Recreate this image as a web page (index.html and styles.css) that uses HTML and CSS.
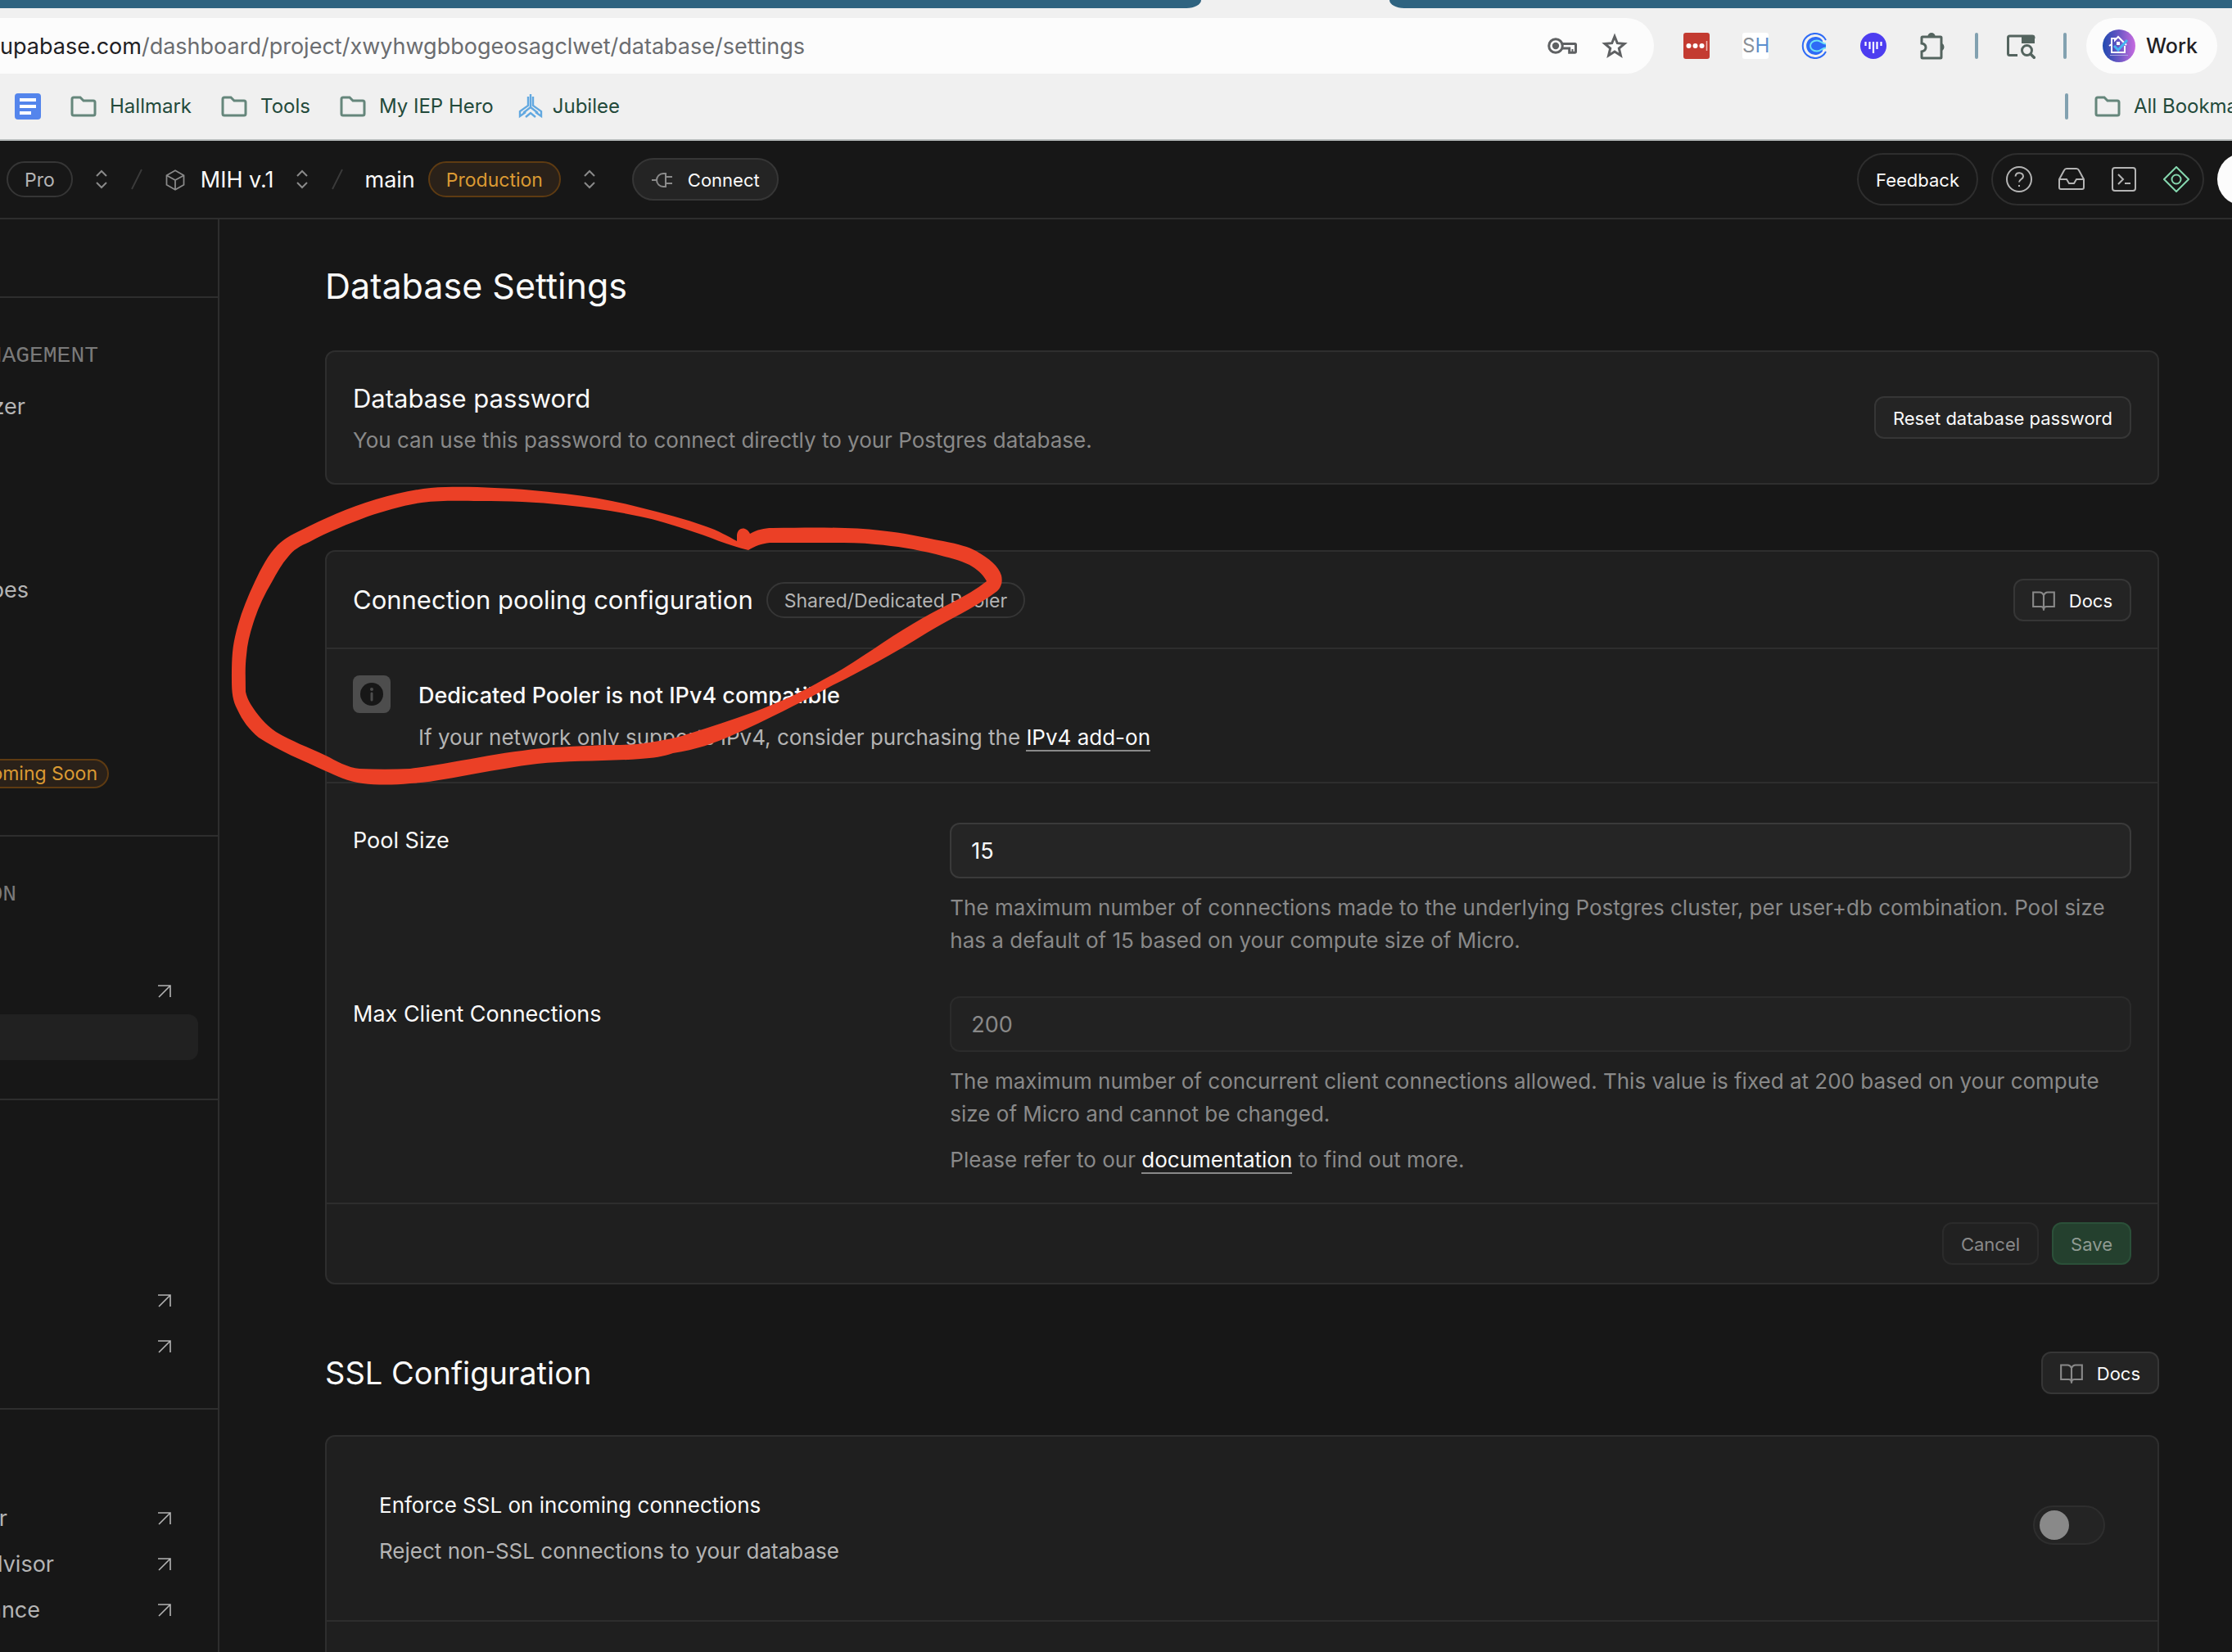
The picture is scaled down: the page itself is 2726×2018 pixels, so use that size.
FILE: index.html
```html
<!DOCTYPE html>
<html lang="en">
<head>
<meta charset="utf-8">
<meta name="viewport" content="width=device-width, initial-scale=1">
<title>Database Settings</title>
<link rel="stylesheet" href="styles.css">
</head>
<body>
<svg class="sprite" aria-hidden="true">
  <symbol id="folder" viewBox="0 0 32 32"><path d="M2 7a2 2 0 0 1 2-2h8l4 4h12a2 2 0 0 1 2 2v14a2 2 0 0 1-2 2H4a2 2 0 0 1-2-2z" fill="none" stroke="currentColor" stroke-width="3"/></symbol>
  <symbol id="updown" viewBox="0 0 24 24"><path d="M6 8l6-6 6 6M6 16l6 6 6-6" fill="none" stroke="currentColor" stroke-width="2"/></symbol>
  <symbol id="slash" viewBox="0 0 14 26"><path d="M13 1L1 25" fill="none" stroke="currentColor" stroke-width="2"/></symbol>
  <symbol id="external" viewBox="0 0 18 18"><path d="M1 2h15v14M16 2L2 16" fill="none" stroke="currentColor" stroke-width="1.600"/></symbol>
  <symbol id="book" viewBox="0 0 24 24"><path d="M12 6v16M12 6c-1-2-2-3-4-3H1v15h8c1.500 0 3 1 3 3 0-2 1.500-3 3-3h8V3h-7c-2 0-3 1-4 3z" fill="none" stroke="currentColor" stroke-width="1.800"/></symbol>
</svg>

<div class="tabs"><span class="tab-left"></span><span class="tab-right"></span></div>
<div class="toolbar">
  <div class="address">
    <span class="address-text">upabase.com<span class="path">/dashboard/project/xwyhwgbbogeosagclwet/database/settings</span></span>
    <span class="address-icons">
      <svg width="36" height="24" viewBox="0 0 36 24" fill="none" stroke="#5f6163"><circle cx="10" cy="12" r="8.300" stroke-width="3"/><circle cx="10" cy="12" r="4.200" fill="#5f6163" stroke="none"/><path d="M18 9.500h15.500q1 0 1 1v8.500q0 1.300-1.300 1.300h-6.500v-5.300H18" stroke-width="3"/><path d="M30.500 16v4" stroke-width="2"/></svg>
      <svg width="32" height="32" viewBox="0 0 32 32" fill="none" stroke="#5f6163" stroke-width="3"><path d="M16 4.500l3.300 8.200 8.700.7-6.700 5.700 2.100 8.700-7.400-4.700-7.400 4.700 2.100-8.700L4 13.400l8.700-.7z"/></svg>
    </span>
  </div>
  <div class="extensions">
    <svg width="32" height="32" viewBox="0 0 32 32"><rect width="32" height="32" rx="3" fill="#c33b31"/><g fill="#fff"><circle cx="6.500" cy="16" r="3"/><circle cx="14.500" cy="16" r="3"/><circle cx="22.500" cy="16" r="3"/></g><path d="M28.500 10v12" stroke="#f0b9b5" stroke-width="1.500"/></svg>
    <span class="sh">S<b>H</b></span>
    <svg width="32" height="32" viewBox="0 0 32 32" fill="none"><path d="M30 9A15 15 0 1 0 30 23" stroke="#2e6bf6" stroke-width="2"/><path d="M26 9.500A11 11 0 1 0 26 22.500q-1-2 4-4.500v-4q-5-2-4-4.500z" fill="#2e6bf6"/><path d="M30 13.500c-5 0-6-4-11-4-5 0-8 3-8 6.500s3 6.500 8 6.500 6-4 11-4" stroke="#6fe3f5" stroke-width="2"/></svg>
    <svg width="32" height="32" viewBox="0 0 32 32"><circle cx="16" cy="16" r="16" fill="#4d3df0"/><path d="M6.500 11v5M11.500 11v9M16 11v14M20.500 11v9M25.500 11v5" stroke="#fff" stroke-width="2.200"/></svg>
    <svg width="34" height="34" viewBox="0 0 34 34"><path d="M4 6q-1 0-1 1v7q5 1 5 5t-5 5v7q0 1 1 1h22q1 0 1-1V7q0-1-1-1z" fill="none" stroke="#54645f" stroke-width="3"/><path d="M10.500 5a4.500 4 0 0 1 9 0zM28 14a4.500 5 0 0 1 0 9z" fill="#54645f"/></svg>
    <i class="rule"></i>
    <svg width="36" height="32" viewBox="0 0 36 32"><path d="M14 27.500H4.500q-2 0-2-2V6q0-2 2-2H32q2 0 2 2v1" fill="none" stroke="#54645f" stroke-width="3"/><path d="M19 3h14q2 0 2 2v8H19z" fill="#54645f"/><circle cx="25.500" cy="21.500" r="6" fill="none" stroke="#54645f" stroke-width="3"/><path d="M29.500 25.500l6 6" stroke="#54645f" stroke-width="3.500"/></svg>
    <i class="rule"></i>
  </div>
  <button class="profile">
    <svg width="40" height="40" viewBox="0 0 40 40"><defs><linearGradient id="pg"><stop offset="0" stop-color="#1f49b0"/><stop offset=".5" stop-color="#6a57c4"/><stop offset="1" stop-color="#c86be0"/></linearGradient></defs><circle cx="20" cy="20" r="20" fill="url(#pg)"/><path d="M8 20l3-2v-7h4v2l4-4 10 10M11 18v10h16v-8" fill="none" stroke="#fff" stroke-width="2"/><path d="M17 15h4v4h-4z" fill="#fff"/><path d="M14 20l5 5 11-12" fill="none" stroke="#45b5f3" stroke-width="3"/><path d="M9 31.500h22" stroke="#a9a3e0"/></svg>
    Work
  </button>
</div>
<nav class="bookmarks">
  <a href="#" aria-label="Docs"><svg width="32" height="32" viewBox="0 0 32 32"><rect width="32" height="32" rx="4" fill="#5485ec"/><path d="M6 8h20M6 16h20M6 24h14" stroke="#fff" stroke-width="4"/></svg></a>
  <a href="#"><svg class="folder"><use href="#folder"/></svg>Hallmark</a>
  <a href="#"><svg class="folder"><use href="#folder"/></svg>Tools</a>
  <a href="#"><svg class="folder"><use href="#folder"/></svg>My IEP Hero</a>
  <a href="#" class="jubilee"><svg width="30" height="30" viewBox="0 0 30 30" fill="none" stroke="#62a8e0" stroke-width="2.400"><path d="M12 3v11L2 21v6l7-5M18 3v11l10 7v6l-7-5M15 0v16l-9 7M15 16l9 7M9 28l6-5 6 5"/></svg>Jubilee</a>
  <span class="all"><i class="rule"></i><a href="#"><svg class="folder"><use href="#folder"/></svg>All Bookmarks</a></span>
</nav>

<header class="header">
  <span class="badge">Pro</span>
  <svg class="updown"><use href="#updown"/></svg>
  <svg class="slash"><use href="#slash"/></svg>
  <a href="#" class="crumb"><svg width="28" height="28" viewBox="0 0 24 24" fill="none" stroke="#8a8a8a" stroke-width="1.500"><path d="M12 2l9 5v10l-9 5-9-5V7zM3 7l9 5 9-5M12 12v10"/></svg>MIH v.1</a>
  <svg class="updown"><use href="#updown"/></svg>
  <svg class="slash"><use href="#slash"/></svg>
  <a href="#" class="crumb branch">main</a>
  <span class="badge amber">Production</span>
  <svg class="updown"><use href="#updown"/></svg>
  <button class="btn connect"><svg width="28" height="24" viewBox="0 0 28 24" fill="none" stroke="#8a8a8a" stroke-width="2"><path d="M1 12h6M18 4h-3a8 8 0 0 0 0 16h3zM18 8h8M18 16h8"/></svg>Connect</button>
  <div class="header-right">
    <button class="feedback">Feedback</button>
    <div class="tools">
      <button aria-label="Help"><svg viewBox="0 0 32 32"><circle cx="16" cy="16" r="15"/><path d="M11.500 12.500c.5-6 9.500-5.500 9.500 0 0 3.500-5 3.500-5 7M16 23v2"/></svg></button>
      <button aria-label="Inbox"><svg viewBox="0 0 32 32"><path d="M1 16h9l3 5h6l3-5h9M7 5L1 16v10q0 2 2 2h26q2 0 2-2V16L25 5q-1-2-3-2H10q-2 0-3 2z"/></svg></button>
      <button aria-label="SQL"><svg viewBox="0 0 32 32"><rect x="2" y="2" width="28" height="28" rx="3"/><path d="M9 10l6 6-6 6M17 21h7"/></svg></button>
      <button aria-label="Assistant" class="green"><svg viewBox="0 0 32 32"><path d="M16 1l15 15-15 15L1 16z"/><circle cx="16" cy="16" r="5.500"/></svg></button>
    </div>
    <span class="avatar"></span>
  </div>
</header>

<div class="layout">
  <aside class="sidebar">
    <div class="side-top"></div>
    <section>
      <h2><span class="to-120">NAGEMENT</span></h2>
      <ul>
        <li><a href="#" class="to-30">zer</a></li>
        <li></li><li></li><li></li>
        <li><a href="#" class="to-35">pes</a></li>
        <li></li><li></li><li></li>
        <li><span class="soon">oming Soon</span></li>
      </ul>
    </section>
    <section>
      <h2><span class="to-20">ON</span></h2>
      <ul>
        <li></li>
        <li><svg class="ext"><use href="#external"/></svg></li>
        <li class="active"></li>
      </ul>
    </section>
    <section>
      <h2></h2>
      <ul>
        <li></li><li></li>
        <li><svg class="ext"><use href="#external"/></svg></li>
        <li><svg class="ext"><use href="#external"/></svg></li>
      </ul>
    </section>
    <section>
      <h2></h2>
      <ul>
        <li><a href="#" class="to-10">r</a><svg class="ext"><use href="#external"/></svg></li>
        <li><a href="#" class="to-66">dvisor</a><svg class="ext"><use href="#external"/></svg></li>
        <li><a href="#" class="to-50">ance</a><svg class="ext"><use href="#external"/></svg></li>
      </ul>
    </section>
  </aside>

  <main class="main">
    <h1>Database Settings</h1>
    <section class="card password">
      <div>
        <h3>Database password</h3>
        <p>You can use this password to connect directly to your Postgres database.</p>
      </div>
      <button class="btn">Reset database password</button>
    </section>

    <form class="card pooling">
      <div class="card-head">
        <h3>Connection pooling configuration</h3>
        <span class="badge">Shared/Dedicated Pooler</span>
        <button type="button" class="btn docs"><svg class="book"><use href="#book"/></svg>Docs</button>
      </div>
      <div class="callout">
        <svg width="46" height="46" viewBox="0 0 46 46"><rect width="46" height="46" rx="8" fill="#4d4d4d"/><circle cx="23" cy="23" r="14" fill="#171717"/><path d="M23 22v8" stroke="#4d4d4d" stroke-width="3" stroke-linecap="round"/><circle cx="23" cy="17" r="2" fill="#4d4d4d"/></svg>
        <div>
          <h4>Dedicated Pooler is not IPv4 compatible</h4>
          <p>If your network only supports IPv4, consider purchasing the <a href="#">IPv4 add-on</a></p>
        </div>
      </div>
      <div class="fields">
        <label for="pool">Pool Size</label>
        <div>
          <input id="pool" type="text" value="15">
          <p>The maximum number of connections made to the underlying Postgres cluster, per user+db combination. Pool size has a default of 15 based on your compute size of Micro.</p>
        </div>
        <label for="max">Max Client Connections</label>
        <div>
          <input id="max" type="text" value="200" disabled>
          <p>The maximum number of concurrent client connections allowed. This value is fixed at 200 based on your compute size of Micro and cannot be changed.</p>
          <p>Please refer to our <a href="#">documentation</a> to find out more.</p>
        </div>
      </div>
      <div class="card-foot">
        <button type="button" class="btn" disabled>Cancel</button>
        <button type="submit" class="btn primary" disabled>Save</button>
      </div>
    </form>

    <div class="section-head">
      <h2>SSL Configuration</h2>
      <button class="btn docs"><svg class="book"><use href="#book"/></svg>Docs</button>
    </div>
    <section class="card">
      <div class="ssl">
        <div>
          <label for="ssl">Enforce SSL on incoming connections</label>
          <p>Reject non-SSL connections to your database</p>
        </div>
        <input id="ssl" type="checkbox" role="switch">
      </div>
      <div class="ssl-next"></div>
    </section>
  </main>
</div>

<svg class="marker" width="1260" height="980" viewBox="0 0 1260 980" aria-hidden="true">
  <path fill="#eb4026" fill-rule="evenodd" d="M900 661L900 654C901 643 912 643 916 652C925 647 933 645 943 645C1000 644 1040 644 1075 648C1105 651 1125 656 1152 661C1172 665 1183 668 1192 673C1208 682 1220 692 1223 703C1225 712 1222 718 1218 722C1190 743 1158 757 1132 773C1092 798 1052 820 1017 837C975 860 935 880 897 897C872 908 850 916 822 920C810 924 798 926 782 927C740 930 695 929 656 933C630 936 605 941 581 945C553 950 525 956 501 957C480 959 460 959 443 957C425 955 410 947 398 942C370 929 340 917 316 901C304 891 296 880 290 867C284 856 283 845 283 831C283 812 283 795 287 778C292 755 301 732 311 711C319 694 328 677 339 666C346 659 356 653 367 648C395 634 425 620 459 610C483 603 505 598 526 596C555 594 580 595 604 596C635 597 662 600 690 603C722 607 753 612 782 620C810 627 837 634 862 643C877 648 889 655 900 661ZM914 672C891 667 865 655 839 647C820 641 802 635 782 631C750 624 720 620 690 617C655 613 620 612 587 612C560 612 540 611 515 614C493 617 470 624 449 631C425 640 400 650 378 662C366 667 358 672 352 680C344 689 338 700 332 711C323 726 316 741 311 756C306 771 302 785 301 800C299 815 300 830 300 845C301 850 303 855 306 860C314 873 324 885 337 894C355 905 377 913 398 923C410 929 425 938 439 939C460 940 480 940 501 939C518 937 535 934 552 931C582 926 610 920 638 917C670 912 705 912 736 910C757 910 776 910 793 907C810 904 825 902 839 897C868 888 895 879 920 870C952 858 980 845 1006 830C1045 810 1080 782 1115 762C1145 743 1180 730 1205 710C1200 701 1193 695 1184 690C1172 684 1158 681 1143 677C1118 671 1095 667 1069 665C1052 663 1035 663 1017 663L940 663C930 664 922 667 914 672Z"/>
</svg>
</body>
</html>
```
FILE: styles.css
```css
* { box-sizing: border-box; }
body {
  margin: 0;
  height: 100vh;
  position: relative;
  display: flex;
  flex-direction: column;
  overflow: hidden;
  background: #171717;
  color: #fafafa;
  font: 27px/40px Inter, "Liberation Sans", sans-serif;
}
h1, h2, h3, h4, p, ul { margin: 0; padding: 0; font-weight: 400; }
ul { list-style: none; }
a { color: inherit; text-decoration: none; }
button, input { font: inherit; color: inherit; margin: 0; }
button { padding: 0; border: 0; background: none; }
svg { flex: none; }
.sprite { position: absolute; width: 0; height: 0; }
.marker { position: absolute; left: 0; top: 0; pointer-events: none; }

/* Browser chrome */
.tabs { flex: none; display: flex; justify-content: space-between; height: 10px; background: #f0f0f0; }
.tab-left { width: 1467px; background: #2f6380; border-bottom-right-radius: 18px 10px; }
.tab-right { width: 1029px; background: #2f6380; border-bottom-left-radius: 18px 10px; }
.toolbar { flex: none; display: flex; align-items: center; height: 92px; padding-right: 18px; background: #f0f0f0; color: #1f2023; }
.address { flex: 1; height: 68px; display: flex; align-items: center; justify-content: space-between; padding-right: 32px; background: #fcfcfc; border-radius: 0 34px 34px 0; }
.address-text { padding-top: 2px; white-space: nowrap; }
.path { color: #6b6d70; }
.address-icons { display: flex; align-items: center; gap: 30px; }
.extensions { display: flex; align-items: center; gap: 40px; padding: 0 30px 0 36px; }
.extensions .rule { margin: 0 -6px; }
.sh { width: 32px; height: 32px; background: #fff; border-radius: 3px; color: #8b9096; font-size: 24px; line-height: 32px; text-align: center; }
.sh b { color: #5b8fce; font-weight: 400; }
.rule { width: 4px; height: 32px; border-radius: 2px; background: #82a1b0; }
.profile { display: flex; align-items: center; gap: 13px; width: 160px; height: 68px; padding-left: 20px; border-radius: 34px; background: #fcfcfc; font-size: 25px; font-weight: 500; }
.bookmarks { flex: none; display: flex; align-items: center; gap: 36px; height: 70px; padding: 0 0 12px 18px; background: #f0f0f0; border-bottom: 2px solid #b9bdbd; color: #234a3b; font-size: 24px; white-space: nowrap; }
.bookmarks a { display: flex; align-items: center; gap: 16px; }
.bookmarks .jubilee { gap: 12px; margin-left: -6px; }
.folder { width: 32px; height: 32px; color: #65867b; }
.all { display: flex; align-items: center; gap: 32px; width: 204px; margin-left: auto; overflow: hidden; }
.all .rule { flex: none; }

/* Application header */
.header { flex: none; display: flex; align-items: center; height: 96px; padding-left: 8px; border-bottom: 2px solid #2e2e2e; white-space: nowrap; }
.badge { display: inline-flex; align-items: center; height: 44px; padding: 2px 20px 0; border: 2px solid #363636; border-radius: 22px; color: #b4b4b4; font-size: 23px; }
.amber { border-color: #5e3b12; background: #2a2119; color: #db9a33; }
.updown { width: 24px; height: 24px; margin: 0 24px 0 23px; color: #8a8a8a; }
.slash { width: 14px; height: 26px; margin-right: 26px; color: #3a3a3a; }
.crumb { display: flex; align-items: center; gap: 17px; padding-top: 2px; }
.branch { margin-right: 16px; }
.btn { display: inline-flex; align-items: center; justify-content: center; height: 52px; padding: 2px 21px 0; border: 2px solid #363636; border-radius: 12px; background: #242424; font-size: 22px; white-space: nowrap; }
.btn:disabled { border-color: #2b2b2b; background: #212121; color: #898989; }
.btn.primary { border-color: #2b5039; background: #24402e; color: #8f9a92; }
.connect { gap: 17px; margin-left: 16px; border-radius: 26px; }
.docs { gap: 17px; }
.book { width: 28px; height: 28px; color: #898989; }
.header-right { display: flex; align-items: center; gap: 16px; margin-left: auto; }
.feedback { height: 64px; padding: 2px 21px 0; border: 2px solid #2e2e2e; border-radius: 32px; font-size: 22px; }
.tools { display: flex; align-items: center; gap: 32px; height: 64px; padding: 0 16px; border: 2px solid #2e2e2e; border-radius: 32px; }
.tools button { display: flex; color: #b4b4b4; }
.tools svg { width: 32px; height: 32px; fill: none; stroke: currentColor; stroke-width: 2; }
.tools .green { color: #85d6ae; }
.avatar { flex: none; width: 64px; height: 64px; margin-right: -46px; border-radius: 50%; background: #fcfcfc; }

/* Sidebar */
.layout { flex: 1; min-height: 0; display: flex; overflow: hidden; }
.sidebar { flex: none; width: 268px; border-right: 2px solid #2e2e2e; color: #b4b4b4; }
.side-top { height: 96px; border-bottom: 2px solid #2e2e2e; }
.sidebar section { padding: 41px 0 47px; border-bottom: 2px solid #2e2e2e; }
.sidebar h2 { height: 56px; margin-bottom: 8px; color: #7a7a7a; font: 28px/60px "Liberation Mono", monospace; }
.sidebar li { display: flex; align-items: center; justify-content: space-between; height: 56px; margin-right: 24px; padding-right: 32px; }
.sidebar h2 span, .sidebar li a { display: flex; justify-content: flex-end; overflow: hidden; }
.active { border-radius: 0 12px 12px 0; background: #212121; }
.ext { width: 18px; height: 18px; margin-left: auto; color: #b4b4b4; }
.to-10 { width: 9px; }
.to-20 { width: 20px; }
.to-30 { width: 31px; }
.to-35 { width: 35px; }
.to-50 { width: 49px; }
.to-66 { width: 66px; }
.to-120 { width: 120px; }
.soon { display: flex; align-items: center; justify-content: flex-end; width: 133px; height: 36px; padding-right: 12px; border: 2px solid #5e3b12; border-left: 0; border-radius: 0 18px 18px 0; background: #2a2119; color: #db9a33; font-size: 23px; white-space: nowrap; overflow: hidden; }

/* Settings content */
.main { flex: 1; min-width: 0; padding: 52px 89px 0 129px; }
h1 { margin-bottom: 50px; font-size: 43px; line-height: 58px; }
.card { border: 2px solid #2e2e2e; border-radius: 12px; background: #1f1f1f; }
.card h3 { font-size: 31px; line-height: 50px; }
.card p { color: #898989; font-size: 26px; }
.card p a { color: #fafafa; border-bottom: 2px solid #898989; }
.password { display: flex; align-items: center; justify-content: space-between; padding: 32px; margin-bottom: 80px; }
.password p { margin-top: 6px; }
.card-head { display: flex; align-items: center; gap: 16px; height: 119px; padding: 0 32px; border-bottom: 2px solid #2e2e2e; }
.card-head .docs { margin-left: auto; }
.callout { display: flex; gap: 34px; padding: 32px 32px 30px; border-bottom: 2px solid #2e2e2e; }
.callout h4 { font-weight: 500; line-height: 50px; margin-bottom: 2px; }
.card .callout p, .card .ssl p { color: #b4b4b4; }
.callout p { line-height: 48px; }
.fields { display: grid; grid-template-columns: 1fr 2fr; gap: 48px 8px; padding: 48px 32px 32px; }
.fields label { line-height: 44px; }
.fields p { margin-top: 16px; }
.fields input { display: block; width: 100%; height: 68px; padding: 0 24px; border: 2px solid #3a3a3a; border-radius: 12px; background: #252525; }
.fields input:disabled { border-color: #2b2b2b; background: #222; color: #898989; }
.card-foot { display: flex; align-items: center; justify-content: flex-end; gap: 16px; height: 98px; padding: 0 32px; border-top: 2px solid #2e2e2e; }
.section-head { display: flex; align-items: center; justify-content: space-between; height: 56px; margin: 80px 0 48px; }
.section-head h2 { font-size: 38px; }
.ssl { display: flex; justify-content: space-between; padding: 56px 64px; border-bottom: 2px solid #2e2e2e; font-size: 26px; line-height: 56px; }
.ssl input { appearance: none; width: 88px; height: 48px; margin-top: 28px; padding: 4px 6px; border: 2px solid #2e2e2e; border-radius: 24px; background: #242424; }
.ssl input::before { content: ""; display: block; width: 36px; height: 36px; border-radius: 50%; background: #898989; }
.ssl input:checked::before { margin-left: 36px; }
.ssl-next { height: 160px; }
```
